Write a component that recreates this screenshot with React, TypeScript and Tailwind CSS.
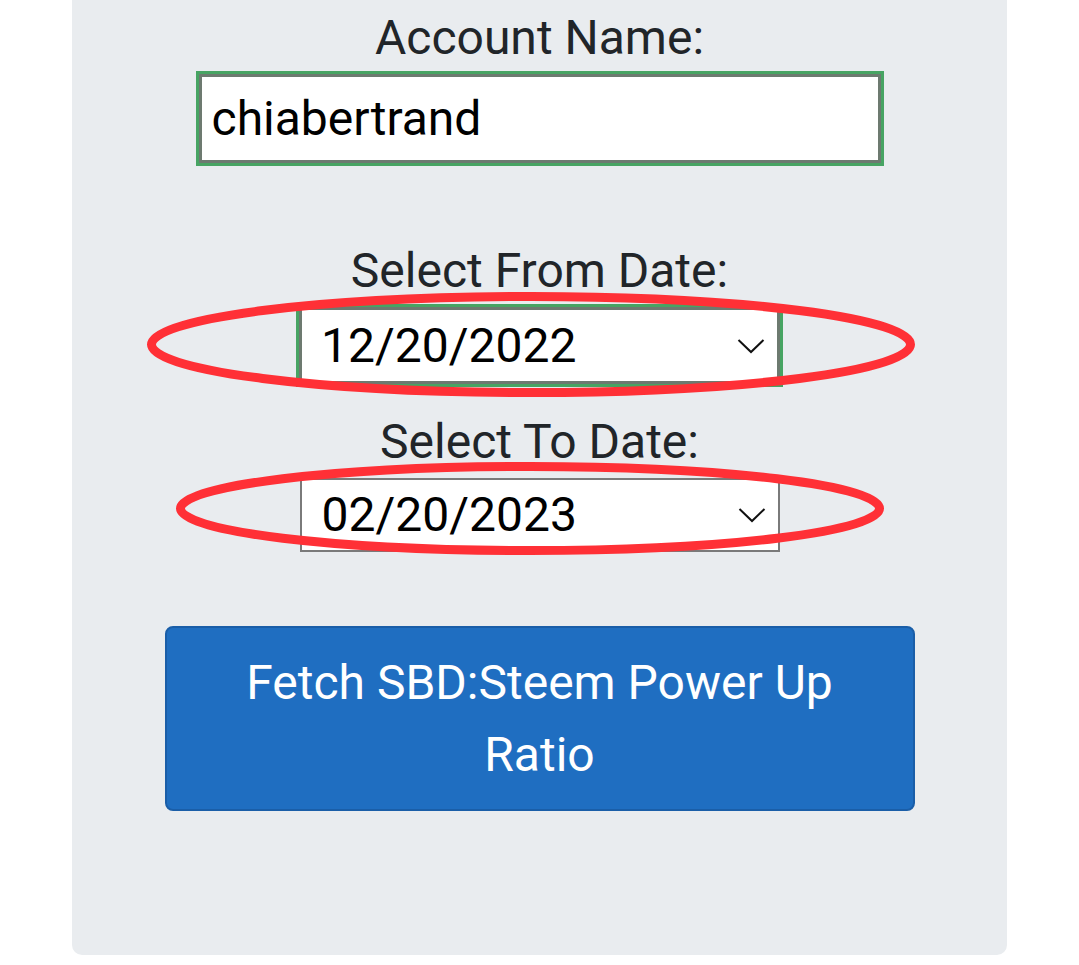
import React from "react";

const Chevron = () => (
  <svg width="28" height="16" viewBox="0 0 28 16" className="mr-[12px]">
    <polyline points="1.5,2 14,14 26.5,2" fill="none" stroke="#111" strokeWidth="2" />
  </svg>
);

const FieldLabel = ({ text }: { text: string }) => (
  <div className="text-[48px] leading-[72px] text-[#212529] text-center">{text}</div>
);

const DateSelect = ({ value, focused }: { value: string; focused?: boolean }) => (
  <div
    className={
      focused
        ? "w-[481px] h-[77px] bg-white border-[3px] border-[#6d7a70] outline-[3px] outline-solid outline-[#47a463] flex items-center justify-between pl-[19px]"
        : "w-[480px] h-[74px] bg-white border-2 border-[#7a7a7a] flex items-center justify-between pl-[20px]"
    }
  >
    <span className="text-[48px] text-black leading-none">{value}</span>
    <Chevron />
  </div>
);

// красные овалы поверх выпадающих списков — пометка на скриншоте
const Annotations = () => (
  <svg className="absolute inset-0 pointer-events-none" width="1079" height="965">
    <ellipse cx="531" cy="344.5" rx="379.5" ry="48" fill="none" stroke="#ff3036" strokeWidth="9" />
    <ellipse cx="530" cy="508.5" rx="349.5" ry="42" fill="none" stroke="#ff3036" strokeWidth="9" />
  </svg>
);

export default function App() {
  return (
    <div className="relative w-[1079px] h-[965px] bg-white font-['Roboto',sans-serif] overflow-hidden">
      <div className="ml-[72px] w-[935px] h-[955px] bg-[#e9ecef] rounded-b-[10px] flex flex-col items-center pt-[2px]">
        <FieldLabel text="Account Name:" />
        <div className="w-[682px] h-[89px] bg-white border-[3px] border-[#6d7a70] outline-[3px] outline-solid outline-[#47a463] flex items-center pl-[10px]">
          <span className="text-[48px] text-black leading-none">chiabertrand</span>
        </div>

        <div className="mt-[72px]">
          <FieldLabel text="Select From Date:" />
        </div>
        <DateSelect value="12/20/2022" focused />

        <div className="mt-[22px]">
          <FieldLabel text="Select To Date:" />
        </div>
        <DateSelect value="02/20/2023" />

        <button className="mt-[74px] w-[750px] h-[185px] bg-[#1f6ec1] border-2 border-[#1a5ea8] rounded-[8px] text-white text-[48px] leading-[72px] px-[60px]">
          Fetch SBD:Steem Power Up Ratio
        </button>
      </div>
      <Annotations />
    </div>
  );
}
